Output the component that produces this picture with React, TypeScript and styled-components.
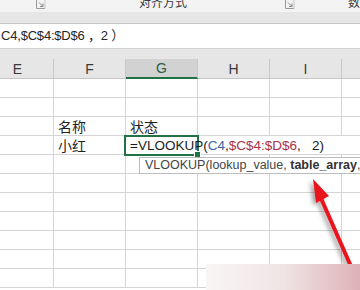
import React from 'react';
import styled, { createGlobalStyle } from 'styled-components';

const GlobalStyle = createGlobalStyle`
  html, body {
    margin: 0;
    padding: 0;
    background: #ffffff;
  }
  body {
    font-family: "Liberation Sans", "Noto Sans CJK SC", sans-serif;
  }
`;

// J is only a sliver at the right edge, so its letter is off-screen
const columns = ['E', 'F', 'G', 'H', 'I', ''];
const ROW_COUNT = 11;

const App: React.FC = () => {
  return (
    <Page>
      <GlobalStyle />
      <Ribbon>
        <Launcher style={{ marginLeft: 35 }}>
          <LauncherIcon />
        </Launcher>
        <RibbonLabel style={{ marginLeft: 93 }}>对齐方式</RibbonLabel>
        <Launcher style={{ marginLeft: 97 }}>
          <LauncherIcon />
        </Launcher>
        <RibbonDivider />
        <RibbonLabel style={{ marginLeft: 52 }}>数字</RibbonLabel>
      </Ribbon>
      <Band height={11} />
      <FormulaBar>C4,$C$4:$D$6 ，2 ）</FormulaBar>
      <Band height={10} />

      <Sheet>
        <HeaderRow>
          {columns.map((c, i) => (
            <HeaderCell key={i} selected={c === 'G'}>
              {c}
            </HeaderCell>
          ))}
        </HeaderRow>

        {Array.from({ length: ROW_COUNT }).map((_, r) => {
          if (r === 3) {
            return (
              <Row key={r}>
                <Cell />
                <Cell>小红</Cell>
                <EditSpan>
                  <ActiveFrame>
                    <FillHandle />
                  </ActiveFrame>
                  <FormulaText>
                    =VLOOKUP(<Ref color="#3d62a8">C4</Ref>,<Ref color="#a83248">$C$4:$D$6</Ref>,{'\u00a0\u00a0\u00a0'}2)
                  </FormulaText>
                </EditSpan>
              </Row>
            );
          }
          return (
            <Row key={r}>
              {columns.map((c, i) => (
                <Cell key={i}>
                  {r === 2 && c === 'F' ? '名称' : ''}
                  {r === 2 && c === 'G' ? '状态' : ''}
                </Cell>
              ))}
            </Row>
          );
        })}
      </Sheet>

      <Tooltip>
        VLOOKUP(lookup_value, <b>table_array</b>,
      </Tooltip>

      <Arrow />
      <Smudge />
    </Page>
  );
};

const LauncherIcon: React.FC = () => (
  <svg width="11" height="10" viewBox="0 0 11 10">
    <path d="M1.5 0 V8.5 H10" fill="none" stroke="#9a9a9a" strokeWidth="1" />
    <path d="M4 2.5 L8 6.5 M8 3.5 V6.5 H5" fill="none" stroke="#8a8a8a" strokeWidth="1" />
    <path d="M10 0 V8.5" fill="none" stroke="#c4c4c4" strokeWidth="1" />
  </svg>
);

const Arrow: React.FC = () => (
  <ArrowLayer width="360" height="290" viewBox="0 0 360 290">
    <defs>
      <filter id="shadow" x="-50%" y="-50%" width="200%" height="200%">
        <feDropShadow dx="-3" dy="2" stdDeviation="2" floodColor="#000" floodOpacity="0.35" />
      </filter>
    </defs>
    <g filter="url(#shadow)">
      <line x1="320" y1="196" x2="364" y2="296" stroke="#e8131b" strokeWidth="4" strokeLinecap="round" />
      <polygon points="313,179 329,196 316,203" fill="#e8131b" />
    </g>
  </ArrowLayer>
);

const Page = styled.div`
  position: relative;
  width: 360px;
  height: 290px;
  overflow: hidden;
  background: #ffffff;
`;

const Ribbon = styled.div`
  display: flex;
  align-items: flex-start;
  height: 12px;
  background: #f3f3f3;
  overflow: hidden;
`;

const RibbonLabel = styled.span`
  margin-top: -5px;
  font-size: 12px;
  line-height: 14px;
  color: #3a3a3a;
  white-space: nowrap;
  font-family: "Noto Sans CJK SC", sans-serif;
`;

const Launcher = styled.span`
  display: flex;
  width: 11px;
  height: 10px;
`;

const RibbonDivider = styled.span`
  width: 1px;
  height: 10px;
  background: #c4c4c4;
  margin-left: 1px;
`;

const Band = styled.div<{ height: number }>`
  height: ${(p) => p.height}px;
  background: #e6e6e6;
`;

const FormulaBar = styled.div`
  height: 26px;
  box-sizing: border-box;
  border-top: 1px solid #c6c6c6;
  border-bottom: 1px solid #d2d2d2;
  background: #ffffff;
  padding-left: 1px;
  font-size: 13px;
  line-height: 24px;
  color: #262626;
  letter-spacing: -0.2px;
  white-space: nowrap;
  overflow: hidden;
`;

const Sheet = styled.div`
  margin-left: -18px;
`;

const HeaderRow = styled.div`
  display: grid;
  grid-template-columns: repeat(6, 72px);
  height: 20px;
  background: #e6e6e6;
  border-bottom: 1px solid #c6c6c6;
  box-sizing: border-box;
`;

const HeaderCell = styled.div<{ selected?: boolean }>`
  display: flex;
  align-items: center;
  justify-content: center;
  box-sizing: border-box;
  border-right: 1px solid #c9c9c9;
  font-size: 14px;
  color: ${(p) => (p.selected ? '#2c5f3e' : '#3a3a3a')};
  background: ${(p) => (p.selected ? '#d2d2d2' : 'transparent')};
  border-bottom: ${(p) => (p.selected ? '2px solid #217346' : 'none')};
  margin-bottom: ${(p) => (p.selected ? '-1px' : '0')};
`;

const Row = styled.div`
  display: grid;
  grid-template-columns: repeat(6, 72px);
  height: 19px;
  box-sizing: border-box;
  border-bottom: 1px solid #d4d4d4;
`;

const Cell = styled.div`
  box-sizing: border-box;
  border-right: 1px solid #d4d4d4;
  padding-left: 4px;
  font-size: 14px;
  line-height: 19px;
  color: #1f1f1f;
  white-space: nowrap;
  font-family: "Noto Sans CJK SC", sans-serif;
`;

const EditSpan = styled.div`
  position: relative;
  grid-column: 3 / -1;
  padding-left: 4px;
`;

const ActiveFrame = styled.div`
  position: absolute;
  left: -2px;
  top: -1px;
  width: 75px;
  height: 21px;
  box-sizing: border-box;
  border: 2px solid #217346;
`;

const FillHandle = styled.span`
  position: absolute;
  right: -4px;
  bottom: -4px;
  width: 5px;
  height: 5px;
  background: #217346;
  border: 1px solid #ffffff;
`;

const FormulaText = styled.div`
  position: relative;
  font-size: 13.5px;
  line-height: 19px;
  color: #1a1a1a;
  white-space: nowrap;
`;

const Ref = styled.span<{ color: string }>`
  color: ${(p) => p.color};
`;

const Tooltip = styled.div`
  position: absolute;
  left: 139px;
  top: 157px;
  height: 17px;
  padding: 0 4px 0 5px;
  box-sizing: border-box;
  border: 1px solid #bcbcbc;
  background: #ffffff;
  font-size: 12.5px;
  line-height: 15px;
  color: #444444;
  white-space: nowrap;

  b {
    color: #333333;
  }
`;

const ArrowLayer = styled.svg`
  position: absolute;
  left: 0;
  top: 0;
  pointer-events: none;
`;

const Smudge = styled.div`
  position: absolute;
  left: 206px;
  top: 264px;
  right: 0;
  bottom: 0;
  background: linear-gradient(to right, #f8f5f5 0%, #f0e4e5 50%, #ddb2b6 100%);
`;

export default App;
